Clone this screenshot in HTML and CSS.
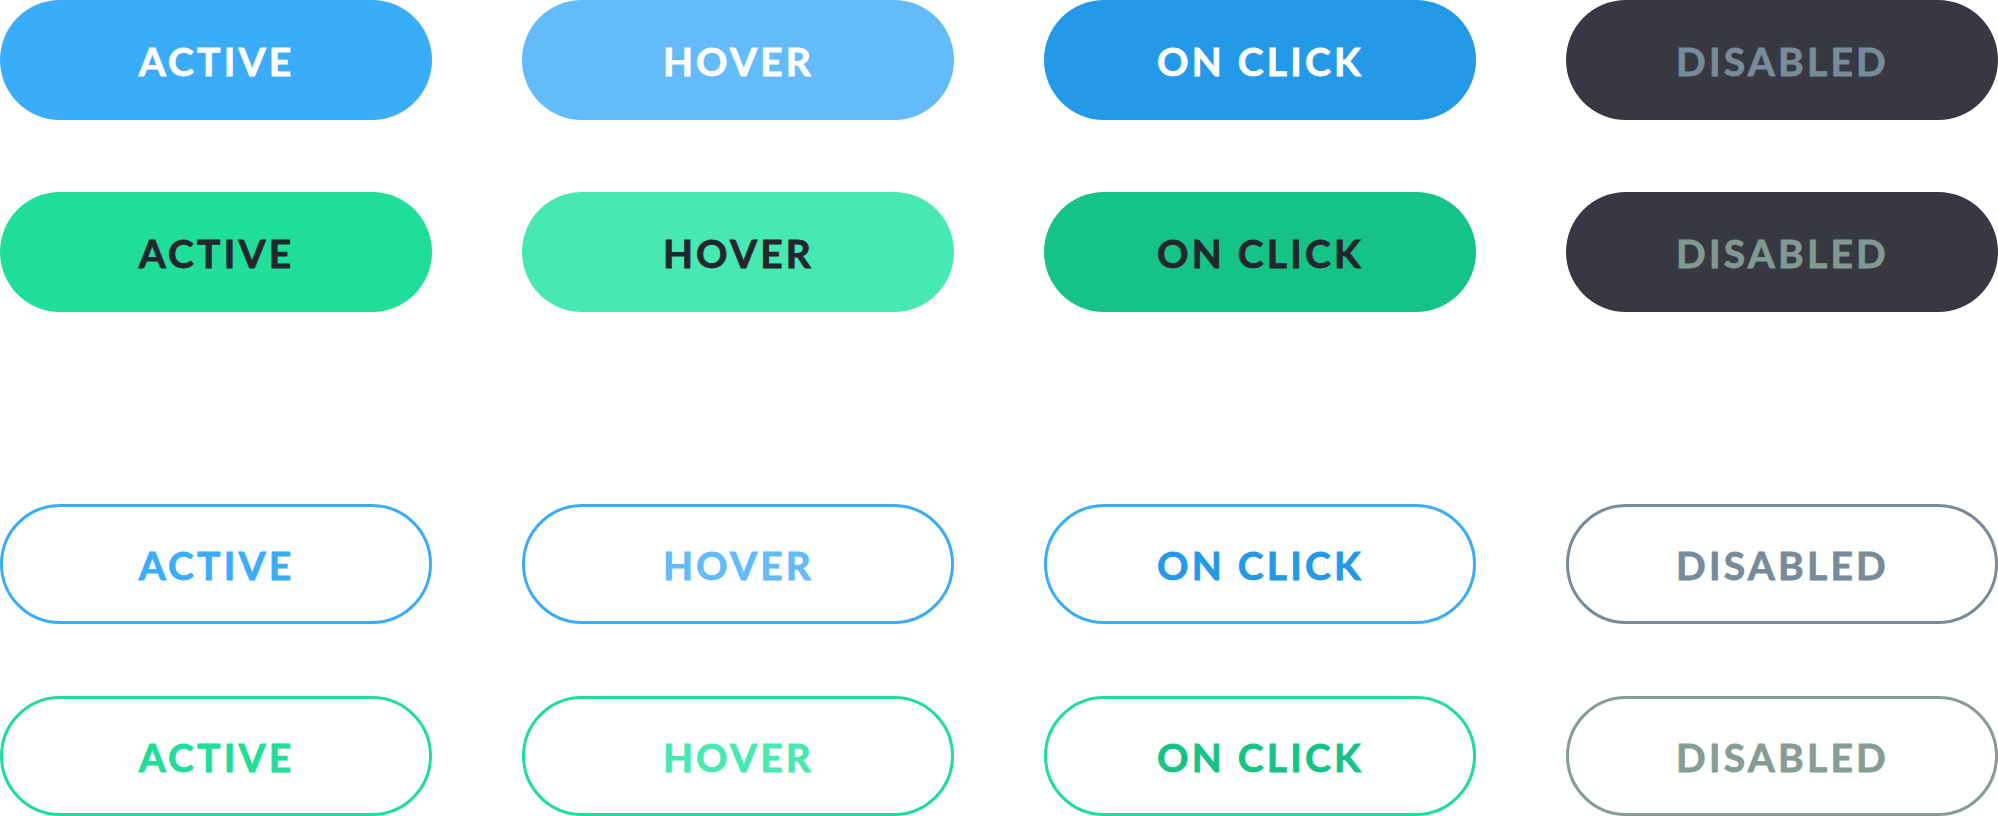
FILE: index.html
```html
<!DOCTYPE html>
<html lang="en">
<head>
<meta charset="utf-8">
<title>Button states</title>
<link rel="stylesheet" href="styles.css">
</head>
<body>
<main class="sheet">
  <section class="group">
    <div class="row">
      <button class="btn solid blue-active">ACTIVE</button>
      <button class="btn solid blue-hover">HOVER</button>
      <button class="btn solid blue-click">ON CLICK</button>
      <button class="btn solid dark-blue">DISABLED</button>
    </div>
    <div class="row">
      <button class="btn solid green-active">ACTIVE</button>
      <button class="btn solid green-hover">HOVER</button>
      <button class="btn solid green-click">ON CLICK</button>
      <button class="btn solid dark-green">DISABLED</button>
    </div>
  </section>
  <section class="group">
    <div class="row">
      <button class="btn outline o-blue o-blue-active">ACTIVE</button>
      <button class="btn outline o-blue o-blue-hover">HOVER</button>
      <button class="btn outline o-blue o-blue-click">ON CLICK</button>
      <button class="btn outline o-gray-blue">DISABLED</button>
    </div>
    <div class="row">
      <button class="btn outline o-green o-green-active">ACTIVE</button>
      <button class="btn outline o-green o-green-hover">HOVER</button>
      <button class="btn outline o-green o-green-click">ON CLICK</button>
      <button class="btn outline o-gray-green">DISABLED</button>
    </div>
  </section>
</main>
</body>
</html>
```
FILE: styles.css
```css
* { box-sizing: border-box; }
html, body { margin: 0; padding: 0; background: #ffffff; }
body { width: 1998px; height: 816px; overflow: hidden; }

.sheet {
  display: flex;
  flex-direction: column;
  gap: 192px;
}
.group {
  display: flex;
  flex-direction: column;
  gap: 72px;
}
.row {
  display: grid;
  grid-template-columns: repeat(4, 432px);
  column-gap: 90px;
}

.btn {
  height: 120px;
  width: 432px;
  border-radius: 60px;
  border: 0;
  margin: 0;
  padding: 2px 0 0 1px;
  display: flex;
  align-items: center;
  justify-content: center;
  font-family: "Lato", "Liberation Sans", sans-serif;
  font-weight: 700;
  font-size: 39px;
  letter-spacing: 3.2px;
  line-height: 1;
  -webkit-text-stroke: 0.8px currentColor;
  cursor: pointer;
}

.outline { background: #ffffff; border: 3px solid; }

.blue-active { background: #3badf8; color: #ffffff; }
.blue-hover { background: #63bbf9; color: #ffffff; }
.blue-click { background: #2499e7; color: #ffffff; }
.dark-blue { background: #383843; color: #778b9b; }

.green-active { background: #20de99; color: #24262e; }
.green-hover { background: #48e9b0; color: #24262e; }
.green-click { background: #16c386; color: #24262e; }
.dark-green { background: #383843; color: #819a91; }

.o-blue { border-color: #3badf8; }
.o-blue-active { color: #3badf8; }
.o-blue-hover { color: #63bbf9; }
.o-blue-click { color: #2499e7; }
.o-gray-blue { border-color: #778b9b; color: #778b9b; }

.o-green { border-color: #20de99; }
.o-green-active { color: #20de99; }
.o-green-hover { color: #48e9b0; }
.o-green-click { color: #16c386; }
.o-gray-green { border-color: #859d94; color: #859d94; }
```
